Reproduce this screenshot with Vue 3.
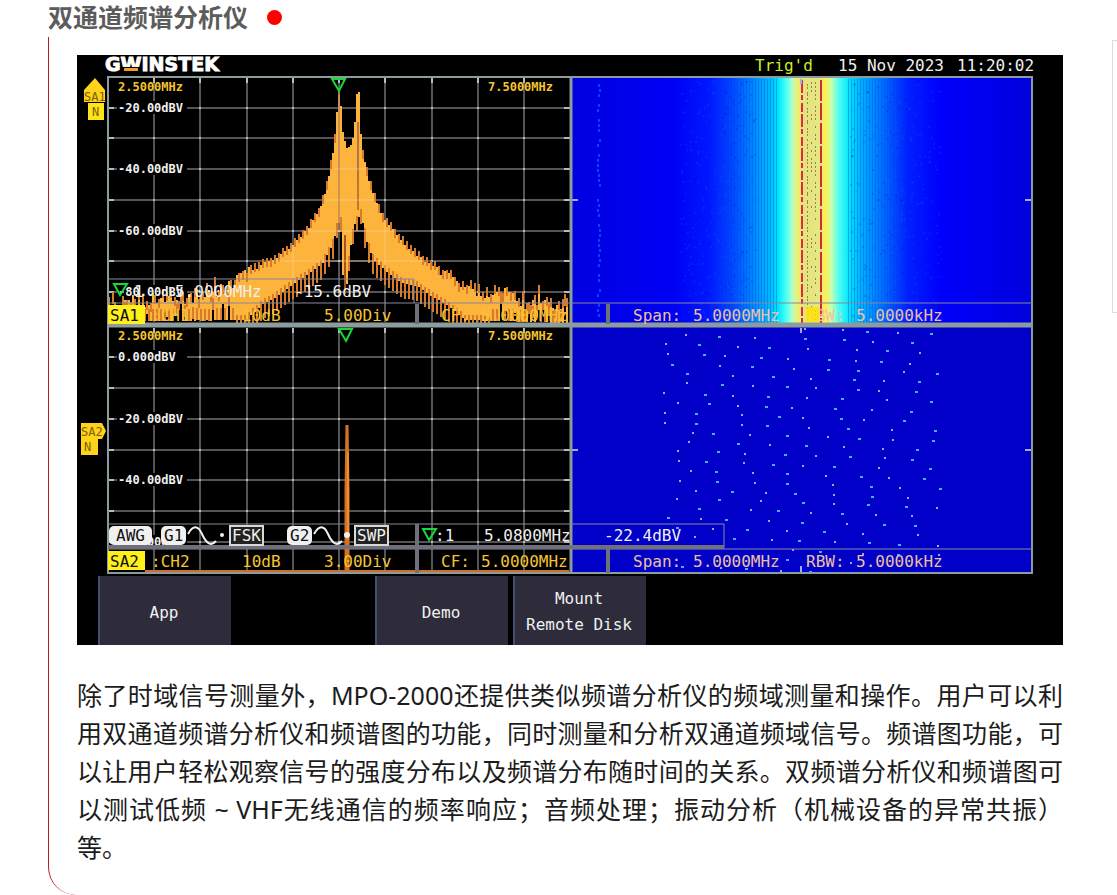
<script setup>
function makeRandom(seed) {
  let s = seed
  return () => {
    s = (s * 16807) % 2147483647
    return s / 2147483647
  }
}

function interpolate(points, x) {
  for (let i = 1; i < points.length; i++) {
    const [x1, y1] = points[i]
    if (x <= x1) {
      const [x0, y0] = points[i - 1]
      return y0 + ((y1 - y0) * (x - x0)) / (x1 - x0)
    }
  }
  return points[points.length - 1][1]
}

// Grid
const columns = [154, 200, 247, 293, 339, 385, 432, 478, 524]
const upperRows = [108, 138, 169, 200, 231, 261, 292]
const lowerRows = [357, 388, 419, 450, 480, 511, 542]

// Channel 1 spectrum envelope
const upper = [[108, 304], [150, 300], [200, 296], [225, 288], [247, 272], [262, 265], [276, 258], [292, 246], [309, 227], [321, 207], [327, 185], [332, 160], [336, 133], [338, 93], [340, 93], [343, 133], [347, 147], [350, 147], [353, 138], [356, 115], [357, 93], [359, 93], [361, 133], [363, 153], [368, 177], [375, 198], [384, 219], [397, 235], [413, 252], [430, 264], [447, 274], [463, 284], [480, 293], [503, 296], [520, 303], [568, 307]]
const lower = [[108, 322], [246, 320], [262, 305], [276, 297], [293, 284], [309, 274], [323, 263], [333, 244], [338, 224], [341, 222], [343, 275], [347, 284], [350, 250], [355, 224], [361, 214], [367, 242], [373, 259], [385, 270], [402, 283], [417, 286], [433, 297], [447, 305], [457, 313], [466, 320], [568, 323]]
const rnd = makeRandom(4711)
const top = []
const bottom = []
const teeth = []
for (let x = 109; x <= 568; x += 2) {
  const noisy = x < 250 || x > 440
  const veryNoisy = x < 235 || x > 490
  let a = interpolate(upper, x) + (rnd() - 0.5) * (veryNoisy ? 15 : noisy ? 11 : 3)
  if (veryNoisy && rnd() > 0.93) a -= 14
  let b = interpolate(lower, x)
  if (veryNoisy) b -= rnd() > 0.6 ? rnd() * 18 : 0
  b = Math.max(b, a + 2)
  const ra = Math.round(a)
  const rb = Math.round(b)
  top.push(`${x - 1},${ra} ${x + 1},${ra}`)
  bottom.unshift(`${x + 1},${rb} ${x - 1},${rb}`)
  const narrow = x > 335 && x < 363
  if (x % 4 === 1) {
    const drop = veryNoisy ? 0 : narrow ? 10 : 15
    teeth.push({ x, y1: rb - (veryNoisy ? 12 : 5), y2: Math.min(323, rb + drop) })
  }
  if (x % 4 === 3 && !narrow) teeth.push({ x, y1: ra - 4, y2: ra + 5 })
}
const trace = [...top, ...bottom].join(' ')

// Waterfall texture
const stripes = []
for (let x = 722; x < 912; x += 3) {
  if (x > 776 && x < 848) continue
  const distance = x < 800 ? 776 - x : x - 848
  stripes.push({ x, o: Math.max(0.05, 0.3 - distance / 250) })
}
const specks = []
const rs = makeRandom(91)
for (let i = 0; i < 900; i++) {
  const left = rs() > 0.5
  const x = Math.round(left ? 680 + rs() * 75 : 850 + rs() * 90)
  specks.push({ x, y: Math.round(80 + rs() * 240), light: rs() > 0.5 })
}
const faint = []
for (let y = 84; y < 322; y += 5) if (rs() > 0.3) faint.push({ x: 597 + Math.round(rs() * 2), y })
const hotDots = []
for (let y = 82; y < 322; y += 4) {
  hotDots.push({ x: 807, y: y + Math.round(rs() * 2) })
  if (rs() > 0.3) hotDots.push({ x: 815, y })
  if (rs() > 0.6) hotDots.push({ x: 811, y })
}

// Channel 2 waterfall echoes, three units per screen pixel
const echoes = `347,106 446,110 556,113 704,117 820,91 892,95 985,99 1082,102 288,131 386,136 504,140 597,143 715,147 823,121 910,125 1027,128 295,161 401,165 466,169 572,173 655,176 776,180 860,150 951,154 1049,158 306,194 450,198 545,202 672,206 774,209 858,184 932,187 1021,191 350,223 490,228 608,232 722,236 863,213 1001,217 1100,221 352,250 455,254 549,257 652,261 739,265 851,239 941,242 1046,246 282,280 406,284 488,287 593,291 712,295 865,269 927,272 1038,276 324,309 417,313 504,317 588,320 667,324 817,298 950,301 1084,305 286,339 377,343 517,346 628,350 699,353 794,328 907,331 1023,335 286,368 379,372 515,376 592,379 717,383 812,357 882,361 1001,364 370,398 430,401 541,405 650,408 775,412 833,387 967,391 1094,394 356,427 504,431 600,435 709,438 823,442 866,416 968,420 1090,424 325,453 445,457 524,461 645,464 737,468 841,471 939,446 1042,450 328,483 408,486 521,490 610,494 699,497 792,501 944,475 1027,479 363,512 439,516 550,519 652,523 767,527 874,531 927,505 1080,508 331,542 440,546 554,549 652,553 789,556 902,560 956,534 1063,538 377,572 487,575 589,579 676,582 791,586 905,590 991,564 1110,567 321,597 446,601 572,604 698,608 792,612 895,616 1013,594 388,627 542,630 623,634 723,638 816,641 919,645 1007,620 1100,623 295,653 392,657 468,660 598,664 696,668 831,671 943,675 1026,649 320,684 429,686 530,689 652,693 761,697 878,701 1035,678 375,712 492,716 606,719 687,722 796,726 896,730 1045,705 988,734 1105,737 443,745 668,751 750,755 878,761 983,764 1106,766 337,800 452,803 527,806 632,812 719,815 843,789 650,781 706,88`
  .split(' ')
  .map((p, i) => {
    const [x, y] = p.split(',').map(Number)
    return { x: Math.round(570 + x / 3), y: Math.round(300 + y / 3), bright: i % 2 === 1 }
  })

const levels = [
  { text: '-20.00dBV', y: 112 }, { text: '-40.00dBV', y: 173 }, { text: '-60.00dBV', y: 235 }, { text: '-80.00dBV', y: 296 },
  { text: '0.000dBV', y: 361 }, { text: '-20.00dBV', y: 423 }, { text: '-40.00dBV', y: 484 }, { text: '-60.00dBV', y: 546 }
]
const footers = [
  { y: 321, name: 'SA1', channel: ':CH1', div: '5.00Div' },
  { y: 567, name: 'SA2', channel: ':CH2', div: '3.00Div' }
]
const softKeys = [
  { x: 98, lines: [{ text: 'App', y: 618 }] },
  { x: 375, lines: [{ text: 'Demo', y: 618 }] },
  { x: 513, lines: [{ text: 'Mount', y: 604 }, { text: 'Remote Disk', y: 630 }] }
]
</script>

<template>
  <div class="page" lang="zh-CN">
    <main class="article">
      <header class="heading">
        <h2>双通道频谱分析仪</h2>
        <span class="dot"></span>
      </header>
      <section class="body">
        <svg class="screen" viewBox="77 55 986 590" role="img" aria-label="GW Instek MPO-2000">
          <defs>
            <linearGradient id="heat" gradientUnits="userSpaceOnUse" x1="571" y1="0" x2="1032" y2="0">
              <stop offset="0" stop-color="#0000e0" />
              <stop offset="0.22" stop-color="#0000f4" />
              <stop offset="0.3" stop-color="#0018ff" />
              <stop offset="0.35" stop-color="#0048ff" />
              <stop offset="0.39" stop-color="#0080ff" />
              <stop offset="0.43" stop-color="#00b8ff" />
              <stop offset="0.45" stop-color="#00e8ff" />
              <stop offset="0.465" stop-color="#40fff4" />
              <stop offset="0.48" stop-color="#b0ffd0" />
              <stop offset="0.49" stop-color="#f0f070" />
              <stop offset="0.505" stop-color="#e4e47c" />
              <stop offset="0.54" stop-color="#e4e884" />
              <stop offset="0.552" stop-color="#fff050" />
              <stop offset="0.565" stop-color="#c8ffb0" />
              <stop offset="0.58" stop-color="#50fff0" />
              <stop offset="0.605" stop-color="#00e4ff" />
              <stop offset="0.63" stop-color="#00b0ff" />
              <stop offset="0.68" stop-color="#0068ff" />
              <stop offset="0.73" stop-color="#0020ff" />
              <stop offset="0.8" stop-color="#0000fc" />
              <stop offset="1" stop-color="#0000dc" />
            </linearGradient>
          </defs>
          <rect x="77" y="55" width="986" height="590" fill="#000" />

          <text class="logo" x="105" y="71">GWINSTEK</text>
          <rect x="122" y="67" width="18" height="6" fill="#000" />
          <rect x="124" y="68" width="14" height="3" fill="#f0a020" />
          <text class="mono trig" x="755" y="71">Trig'd</text>
          <text class="mono white" x="838" y="71">15 Nov 2023</text>
          <text class="mono white" x="957" y="71">11:20:02</text>

          <rect x="571" y="78" width="461" height="246" fill="url(#heat)" />
          <rect x="571" y="327" width="461" height="246" fill="#0000c8" />
          <rect v-for="s in stripes" :key="s.x" :x="s.x" y="79" width="1" height="244" fill="#0020c0" :opacity="s.o" />
          <rect v-for="(s, i) in specks" :key="'s' + i" :x="s.x" :y="s.y" width="2" height="2" :fill="s.light ? '#0080ff' : '#0000e0'" opacity="0.16" />
          <rect v-for="(s, i) in faint" :key="'f' + i" :x="s.x" :y="s.y" width="2" height="3" fill="#1040ff" />
          <path d="M802 80V323" stroke="#e02848" stroke-width="2" stroke-dasharray="13 2 5 3 9 2" />
          <path d="M821 80V323" stroke="#d82830" stroke-width="2" stroke-dasharray="21 2 17 3" />
          <rect v-for="(s, i) in hotDots" :key="'h' + i" :x="s.x" :y="s.y" width="1" height="2" fill="#a87850" />
          <rect v-for="(e, i) in echoes" :key="'e' + i" :x="e.x - 1" :y="e.y - 1" :width="e.bright ? 3 : 2" height="2" :fill="e.bright ? '#45b0ff' : '#9aa4f8'" />

          <g stroke="#545454" stroke-width="2">
            <path v-for="x in columns" :key="'c' + x" :d="`M${x} 79V322M${x} 328V571`" />
            <path v-for="y in upperRows" :key="'u' + y" :d="`M108 ${y}H570`" />
            <path v-for="y in lowerRows" :key="'l' + y" :d="`M108 ${y}H570`" />
          </g>
          <g fill="#bbb">
            <template v-for="y in [...upperRows, ...lowerRows]" :key="'t' + y">
              <rect x="108" :y="y - 1" width="6" height="2" />
              <rect x="564" :y="y - 1" width="6" height="2" />
              <rect v-for="x in columns" :key="x" :x="x - 1" :y="y - 1" width="2" height="2" />
            </template>
            <rect v-for="x in columns" :key="'m' + x" :x="x - 1" y="78" width="2" height="5" />
            <rect v-for="x in columns" :key="'n' + x" :x="x - 1" y="328" width="2" height="5" />
          </g>
          <rect v-for="l in levels" :key="'b' + l.y" x="117" :y="l.y - 11" width="70" height="13" fill="#000" />

          <polygon :points="trace" fill="#fdb43c" />
          <path v-for="(t, i) in teeth" :key="'k' + i" :d="`M${t.x} ${t.y1}V${t.y2}`" stroke="#d87c2c" stroke-width="2" />
          <path d="M339 92V174M358 122V180" stroke="#b87440" stroke-width="2" />
          <path d="M339 174V230M358 180V210" stroke="#78401c" stroke-width="1" />
          <path d="M345 235V294" stroke="#a85020" stroke-width="2" />
          <g stroke="#ffd9a0" stroke-width="1" opacity="0.55">
            <path d="M334 169H366M325 200H375M308 231H394M277 261H426M293 247V284M339 95V230M385 221V270" />
          </g>
          <path d="M346 572V490L347 425L348 490V572" fill="none" stroke="#d87020" stroke-width="3" />
          <path d="M348 452V540" stroke="#ffb040" stroke-width="1" />
          <path d="M145 571H569" stroke="#c87030" stroke-width="2" />

          <text v-for="l in levels" :key="'v' + l.y" class="mono small white" x="118" :y="l.y">{{ l.text }}</text>
          <template v-for="y in [91, 340]" :key="'q' + y">
            <text class="mono small yellow" x="118" :y="y">2.5000MHz</text>
            <text class="mono small yellow" x="488" :y="y">7.5000MHz</text>
          </template>

          <g fill="none" stroke="#8c9c9c" stroke-width="2">
            <rect x="108" y="77" width="924" height="496" />
            <path d="M571 77V573" stroke-width="3" />
            <path d="M108 325H1032" stroke-width="5" />
          </g>
          <g fill="none" stroke="#88889c" stroke-width="1">
            <path d="M108 279H414V303M108 303H1032M108 524H724V548M108 549H1032" />
          </g>
          <g fill="none" stroke="#70707c" stroke-width="4">
            <path d="M417 304V324M608 304V324M417 524V573M608 549V573M108 547H724" />
          </g>
          <g stroke="#a8a8f0" stroke-width="2">
            <path d="M572 200H578M1025 200H1031M572 450H578M1025 450H1031M801 328V333M801 566V572M801 79V84" />
          </g>

          <polygon points="95,78 105,90 105,102 84,102 84,90" fill="#ffd21c" />
          <rect x="88" y="103" width="16" height="17" fill="#ffe41c" />
          <text class="mono flag" x="84" y="101">SA1</text>
          <text class="mono flag" x="92" y="116">N</text>
          <polygon points="81,423 102,423 106,431 102,439 98,439 98,455 81,455" fill="#ffd21c" />
          <text class="mono flag" x="81" y="436">SA2</text>
          <text class="mono flag" x="84" y="451">N</text>

          <g v-for="f in footers" :key="f.name">
            <rect x="108" :y="f.y - 16" width="37" height="19" fill="#fff01c" />
            <text class="mono" x="110" :y="f.y">{{ f.name }}</text>
            <text class="mono yellow" x="151" :y="f.y">{{ f.channel }}</text>
            <text class="mono yellow" x="242" :y="f.y">10dB</text>
            <text class="mono yellow" x="324" :y="f.y">{{ f.div }}</text>
            <text class="mono yellow" x="441" :y="f.y">CF:</text>
            <text class="mono yellow" x="481" :y="f.y">5.0000MHz</text>
            <text class="mono tan" x="633" :y="f.y">Span:</text>
            <text class="mono tan" x="693" :y="f.y">5.0000MHz</text>
            <text class="mono tan" x="806" :y="f.y">RBW:</text>
            <text class="mono tan" x="856" :y="f.y">5.0000kHz</text>
          </g>
          <rect x="806" y="307" width="13" height="15" fill="#ffe400" opacity="0.8" />

          <text class="mono white" x="134" y="297">1</text>
          <text class="mono white" x="175" y="297">5.0000MHz</text>
          <text class="mono white" x="294" y="297">-15.6dBV</text>
          <text class="mono white" x="435" y="541">:1</text>
          <text class="mono white" x="484" y="541">5.0800MHz</text>
          <text class="mono white" x="604" y="541">-22.4dBV</text>
          <g fill="none" stroke="#18d838" stroke-width="2">
            <path d="M332 79H345L339 91ZM339 329H352L346 341ZM114 284H127L120 295ZM423 529H436L429 540Z" />
          </g>

          <g fill="#f0f0f0">
            <rect x="109" y="526" width="43" height="19" rx="5" />
            <rect x="161" y="526" width="25" height="19" rx="5" />
            <rect x="287" y="526" width="25" height="19" rx="5" />
            <circle cx="222" cy="535" r="2" />
            <circle cx="347" cy="535" r="3" />
          </g>
          <text class="mono" x="116" y="541">AWG</text>
          <text class="mono" x="164" y="541">G1</text>
          <text class="mono" x="290" y="541">G2</text>
          <path d="M188 534C193 525 198 525 202 534S211 547 216 541M314 534C319 525 324 525 328 534S337 547 342 541" fill="none" stroke="#f0f0f0" stroke-width="2" />
          <rect x="230" y="526" width="33" height="19" fill="#222" stroke="#d8d8d8" stroke-width="2" />
          <rect x="355" y="526" width="33" height="19" fill="#222" stroke="#d8d8d8" stroke-width="2" />
          <text class="mono white" x="232" y="541">FSK</text>
          <text class="mono white" x="357" y="541">SWP</text>

          <g v-for="k in softKeys" :key="k.x">
            <rect :x="k.x" y="576" width="133" height="69" fill="#2e2c3a" />
            <rect :x="k.x" y="576" width="2" height="69" fill="#464e72" />
            <text v-for="l in k.lines" :key="l.text" class="mono white" text-anchor="middle" :x="k.x + 66" :y="l.y">{{ l.text }}</text>
          </g>
        </svg>
        <p>除了时域信号测量外，MPO-2000还提供类似频谱分析仪的频域测量和操作。用户可以利用双通道频谱分析仪和频谱图的功能，同时测量和分析双通道频域信号。频谱图功能，可以让用户轻松观察信号的强度分布以及频谱分布随时间的关系。双频谱分析仪和频谱图可以测试低频 ~ VHF无线通信的频率响应；音频处理；振动分析（机械设备的异常共振）等。</p>
      </section>
    </main>
    <aside class="side"></aside>
  </div>
</template>

<style>
body {
  margin: 0;
  background: #fff;
}
</style>

<style scoped>
.page {
  display: flex;
  align-items: flex-start;
  padding-left: 48px;
  overflow: hidden;
  font-family: "Noto Sans", "Noto Sans CJK SC", sans-serif;
}
.article {
  flex: 1;
  min-width: 0;
}
.heading {
  display: flex;
  align-items: flex-start;
  gap: 19px;
  height: 37px;
}
.heading h2 {
  margin: 0;
  font-size: 25px;
  line-height: 32px;
  font-weight: 700;
  color: #5c5c5c;
  font-family: "Noto Sans CJK SC", sans-serif;
}
.dot {
  width: 15px;
  height: 15px;
  margin-top: 10px;
  border-radius: 50%;
  background: #f00;
}
.body {
  padding: 18px 0 29px 28px;
  border-left: 1px solid #b81c1c;
  border-bottom-left-radius: 28px;
}
.screen {
  display: block;
  width: 100%;
  height: auto;
}
.body p {
  margin: 31px 0 0;
  font-size: 25px;
  line-height: 38px;
  color: #1c1c1c;
  text-align: justify;
  text-spacing-trim: space-all;
}
.side {
  width: 4px;
  height: 271px;
  margin: 40px 0 0 49px;
  border: 1px solid #ddd;
  border-right: 0;
}
.mono {
  font-family: "DejaVu Sans Mono", monospace;
  font-size: 16px;
  fill: #111;
  white-space: pre;
}
.small {
  font-size: 12px;
  font-weight: 700;
}
.flag {
  font-size: 12px;
  fill: #7a6200;
}
.white {
  fill: #f0f0f0;
}
.yellow {
  fill: #f5c52c;
}
.tan {
  fill: #efc0a0;
}
.trig {
  fill: #c8f028;
}
.logo {
  font-family: "DejaVu Sans", sans-serif;
  font-size: 19px;
  font-weight: 700;
  fill: #fff;
  stroke: #fff;
  stroke-width: 1px;
}
</style>
